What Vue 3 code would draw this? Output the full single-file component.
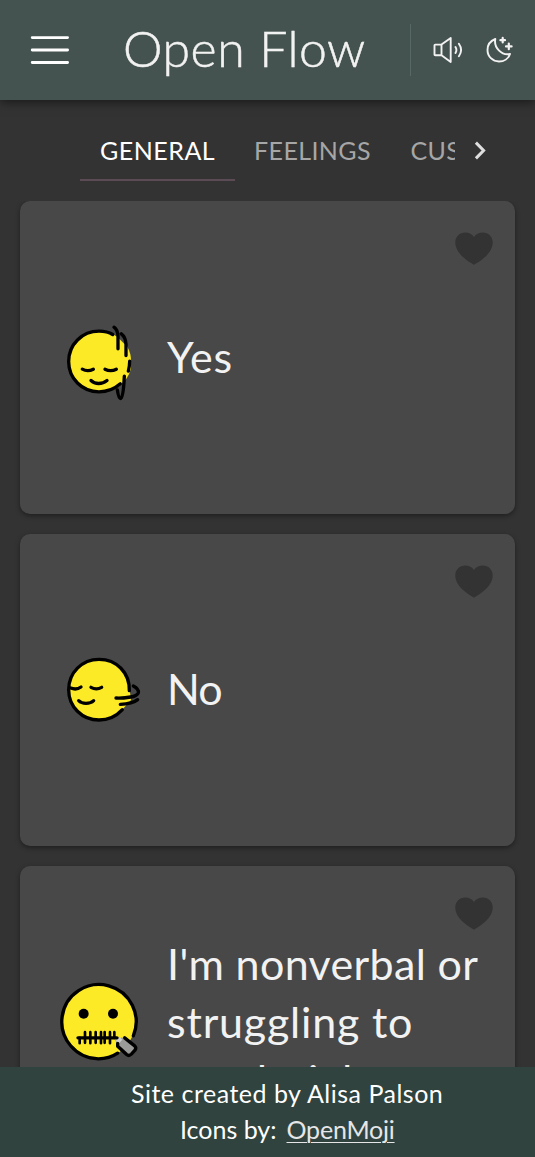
<script setup>
const tabs = [
  { label: 'General', cls: 'active' },
  { label: 'Feelings', cls: 'feelings' },
  { label: 'Custom', cls: 'custom' },
]
const cards = [
  { face: 'yes', text: ['Yes'] },
  { face: 'no', text: ['No'] },
  { face: 'zip', text: ["I'm nonverbal or", 'struggling to', 'speak right now'] },
]
</script>

<template>
  <div class="app">
    <header class="bar">
      <button class="menu" aria-label="Menu">
        <svg width="40" height="30" viewBox="0 0 40 30">
          <path d="M2.2 2.6H37.6M2.2 15H37.6M2.2 27.5H37.6" stroke="#fff" stroke-width="2.8" stroke-linecap="round" />
        </svg>
      </button>
      <h1>Open Flow</h1>
      <div class="tools">
        <svg width="32" height="28" viewBox="0 0 32 28" fill="none" stroke="#f2f2f2" stroke-width="1.9" stroke-linecap="round" stroke-linejoin="round">
          <path d="M9.500 8.600H3.200Q2.500 8.600 2.500 9.300V18.500Q2.500 19.200 3.200 19.200H9.500M9.500 8.600V19.200L18.700 26V1.900Z" />
          <path d="M23.500 11Q25.300 14 23.500 17M26.900 7.800Q31.300 14 26.900 20.200" />
        </svg>
        <svg width="28" height="28" viewBox="0 0 28 28" fill="none" stroke="#f2f2f2" stroke-width="1.9" stroke-linecap="round" stroke-linejoin="round">
          <path d="M10.300 3C5.600 4.800 2.500 9 2.500 14C2.500 20.500 7.600 25.500 14 25.500C19 25.500 23.500 22.600 25 18C16.500 19.700 8.600 11.500 10.300 3Z" />
          <path d="M17.700 1.900V6.500M15.400 4.200H20M23.800 7.600V13.200M21 10.400H26.600" stroke-width="2.200" />
        </svg>
      </div>
    </header>

    <nav class="tabs">
      <div class="strip">
        <a v-for="t in tabs" :key="t.label" class="tab" :class="t.cls">{{ t.label }}</a>
      </div>
      <svg class="next" width="50" height="60" viewBox="0 0 50 60" fill="none">
        <path d="M20.900 22.600L28.600 30.500L20.900 38.400" stroke="#dedede" stroke-width="3" />
      </svg>
    </nav>

    <main>
      <article v-for="c in cards" :key="c.face" class="card">
        <svg v-if="c.face === 'yes'" class="face" viewBox="0 -7.5 300 300">
          <path d="M147 64C175 64 195 75 212 92L232 112Q243 132 243 153V178Q238 196 229 208L208 230Q185 247 147 247C93 247 56 208 56 156C56 104 96 64 147 64Z" fill="#fdea26" />
          <g class="ink">
            <path d="M188 75C177 68 163 65 147 65C96 65 56 105 56 156C56 207 96 247 147 247C171 247 194 238 211 223" />
            <path d="M192 53Q203 61 204 80V118M214 73Q227 83 228 104V138M239 155Q239 170 235 185M223 200C222 225 219 267 212 267C207 267 204 255 202 241" />
            <path d="M97 179Q113 188 130 179M165 179Q182 188 199 179M123 213Q132 222 146 222Q160 222 171 213" />
          </g>
        </svg>
        <svg v-else-if="c.face === 'no'" class="face" viewBox="0 0 300 300">
          <path d="M147 58C199 58 239 98 239 149L243 180L218 208C199 229 175 240 147 240C96 240 56 200 56 149C56 98 96 58 147 58Z" fill="#fdea26" />
          <g class="ink">
            <path d="M238 152C239 98 200 58 147 58C96 58 56 98 56 149C56 200 96 240 147 240C175 240 199 229 217 209" />
            <path d="M250 138Q267 147 265 158C261 170 230 175 198 174M211 193Q247 192 263 179" />
            <path d="M62 144Q79 151 93 141M123 142Q139 151 155 142M86 182Q94 190 108 190Q123 190 131 182" />
          </g>
        </svg>
        <svg v-else class="face zipper" viewBox="0 7.5 300 300">
          <circle cx="145" cy="157" r="111" fill="#fdea26" />
          <path d="M196 212L216 203L257 235L238 260L201 227Z" fill="#9b9b9a" />
          <path d="M196 209L208 202L217 211L204 224Z" fill="#d0cfce" />
          <g class="ink">
            <path d="M203 251Q178 268 145 268A111.500 111.500 0 1 1 250 199" />
            <path d="M84 205H201" />
            <path d="M89 205V221M105 188V220M121 205V221M137 188V220M153 205V221M164 188V220M180 205V221M193 188V205M121 188V205M153 188V205M180 188V205" stroke-width="8" />
            <path d="M224 205L254 229Q260 235 255 242L244 254Q237 261 230 255L203 230V222" />
          </g>
          <circle cx="101" cy="133" r="15" />
          <circle cx="189" cy="133" r="15" />
        </svg>
        <p class="phrase" :class="c.face"><span v-for="l in c.text" :key="l">{{ l }}</span></p>
        <svg class="heart" width="38" height="33" viewBox="0 0 38 33">
          <path d="M19 32.800C14 29.700 .3 22 .3 10.600C.3 4.500 4.800 .6 10 .6C14 .6 17.200 2.400 19 5C20.800 2.400 24 .6 28 .6C33.200 .6 37.700 4.500 37.700 10.600C37.700 22 24 29.700 19 32.800Z" fill="#333" />
        </svg>
      </article>
    </main>

    <footer>
      <p class="credit">Site created by Alisa Palson</p>
      <p class="icons"><span>Icons by:</span><a>OpenMoji</a></p>
    </footer>
  </div>
</template>

<style>
body { background: #333; overflow: hidden; }
</style>

<style scoped>
.app {
  height: 1157px;
  display: flex;
  flex-direction: column;
  overflow: hidden;
  background: #333;
  color: #f2f2f2;
  font-family: Lato, "Noto Sans", sans-serif;
}
h1, p { margin: 0; font-weight: 400; }
.bar {
  flex: none;
  height: 100px;
  display: flex;
  align-items: center;
  background: #44534f;
  box-shadow: 0 2px 10px rgba(0, 0, 0, .55);
  z-index: 1;
}
.menu { border: 0; background: none; padding: 0; margin-left: 30px; width: 40px; height: 30px; }
.menu svg { display: block; }
h1 {
  width: 287px;
  margin-left: 53px;
  padding-bottom: 4px;
  font-size: 50px;
  line-height: 60px;
  font-weight: 300;
  letter-spacing: .5px;
  white-space: nowrap;
  -webkit-text-stroke: .5px #f2f2f2;
}
.tools {
  height: 52px;
  display: flex;
  align-items: center;
  gap: 21px;
  padding-left: 21px;
  border-left: 1px solid #586864;
}
.tabs { flex: none; height: 101px; display: flex; padding-left: 80px; }
.strip { width: 375px; display: flex; overflow: hidden; }
.tab {
  flex: none;
  box-sizing: border-box;
  height: 81px;
  padding-left: 20px;
  font-size: 25px;
  line-height: 100px;
  text-transform: uppercase;
  color: #a6a6a6;
}
.tab.active { width: 155px; color: #fff; border-bottom: 2px solid #5b4b55; letter-spacing: .5px; }
.tab.feelings { width: 155px; padding-left: 19px; letter-spacing: .4px; }
.tab.custom { padding-left: 20.5px; letter-spacing: .3px; }
.next { margin-top: 20px; }
main { flex: 1; min-height: 0; overflow: hidden; padding: 0 20px; display: flex; flex-direction: column; gap: 20px; }
.card {
  position: relative;
  flex: none;
  height: 312.5px;
  display: flex;
  align-items: center;
  border-radius: 10px;
  background: #484848;
  box-shadow: 0 2px 5px rgba(0, 0, 0, .4);
}
.face { flex: none; width: 100px; height: 100px; margin-left: 30px; }
.ink { fill: none; stroke: #000; stroke-width: 10; stroke-linecap: round; stroke-linejoin: round; }
.phrase { margin-left: 17px; font-size: 43px; line-height: 58px; white-space: nowrap; letter-spacing: .8px; }
.phrase.no { letter-spacing: -1px; margin-top: -2px; }
.phrase span { display: block; }
.phrase.zip span:first-child { letter-spacing: .35px; }
.heart { position: absolute; top: 31px; right: 22.5px; }
footer {
  flex: none;
  box-sizing: border-box;
  height: 90px;
  padding-top: 8px;
  background: #30433f;
  font-size: 25px;
  line-height: 36px;
  color: #fff;
  z-index: 1;
}
.credit { padding-left: 131px; letter-spacing: .5px; }
.icons { padding-left: 180px; display: flex; }
.icons a {
  margin-left: 10px;
  color: #e6e6e6;
  letter-spacing: -.2px;
  text-decoration: underline;
  text-decoration-thickness: 1px;
  text-underline-offset: 3px;
}
</style>
